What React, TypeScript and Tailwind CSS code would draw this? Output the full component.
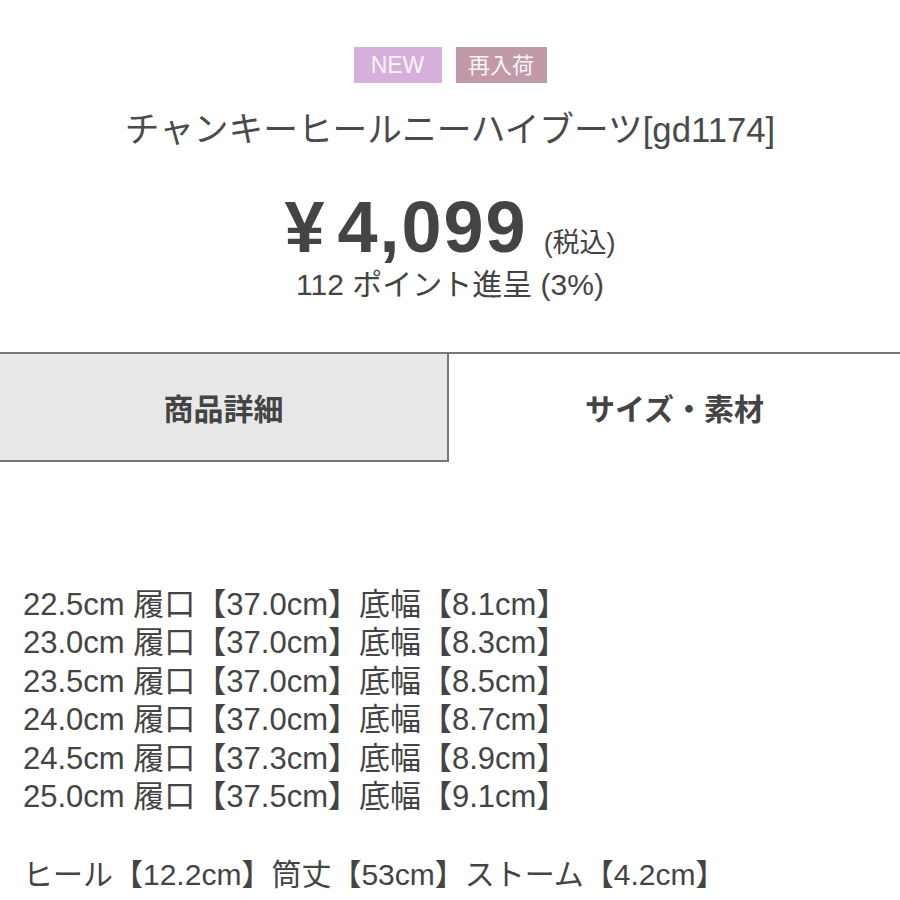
import React from "react";

const rows = [
  ["22.5cm", "37.0cm", "8.1cm"],
  ["23.0cm", "37.0cm", "8.3cm"],
  ["23.5cm", "37.0cm", "8.5cm"],
  ["24.0cm", "37.0cm", "8.7cm"],
  ["24.5cm", "37.3cm", "8.9cm"],
  ["25.0cm", "37.5cm", "9.1cm"],
];

export default function App() {
  return (
    <div
      className="w-[900px] h-[900px] bg-white text-[#444] overflow-hidden"
      style={{ fontFamily: '"Liberation Sans", "Noto Sans CJK JP", sans-serif' }}
    >
      <div className="flex justify-center gap-[14px] pt-[47px]">
        <span className="w-[88px] h-[36px] flex items-center justify-center bg-[#d6b0da] text-[#fbf3fb] text-[23px]">
          NEW
        </span>
        <span className="w-[91px] h-[36px] flex items-center justify-center bg-[#c09aa9] text-[#fbf3f6] text-[22px]">
          再入荷
        </span>
      </div>
      <div className="text-center text-[34.7px] leading-[40px] h-[40px] mt-[27px] text-[#4a4a4a] whitespace-nowrap">
        チャンキーヒールニーハイブーツ[gd1174]
      </div>
      <div className="flex justify-center items-baseline mt-[39px] h-[76px]">
        <span className="text-[72px] leading-[76px] font-bold mr-[13px]">¥</span>
        <span className="text-[72px] leading-[76px] font-bold tracking-[2px]">4,099</span>
        <span className="text-[27px] ml-[16px]">(税込)</span>
      </div>
      <div className="text-center text-[30px] leading-[36px] h-[36px] mt-[2px] whitespace-nowrap">
        112 ポイント進呈 (3%)
      </div>
      <div className="mt-[49px] border-t-2 border-[#777] flex">
        <div
          className="w-[449px] h-[108px] bg-[#e8e8e8] border-r-2 border-b-2 border-[#777] flex items-center justify-center text-[30px] font-bold text-[#444]"
          style={{ fontFamily: '"Noto Sans CJK JP", sans-serif' }}
        >
          商品詳細
        </div>
        <div
          className="flex-1 h-[106px] flex items-center justify-center text-[30px] font-bold text-[#444]"
          style={{ fontFamily: '"Noto Sans CJK JP", sans-serif' }}
        >
          サイズ・素材
        </div>
      </div>
      <div className="pl-[23px] mt-[124px] leading-[38.4px]">
        {rows.map((r, i) => (
          <div key={i} className="whitespace-nowrap text-[31px]">
            {r[0]} 履口【{r[1]}】底幅【{r[2]}】
          </div>
        ))}
        <div className="whitespace-nowrap mt-[40px] text-[30px]">
          ヒール【12.2cm】筒丈【53cm】ストーム【4.2cm】
        </div>
      </div>
    </div>
  );
}
